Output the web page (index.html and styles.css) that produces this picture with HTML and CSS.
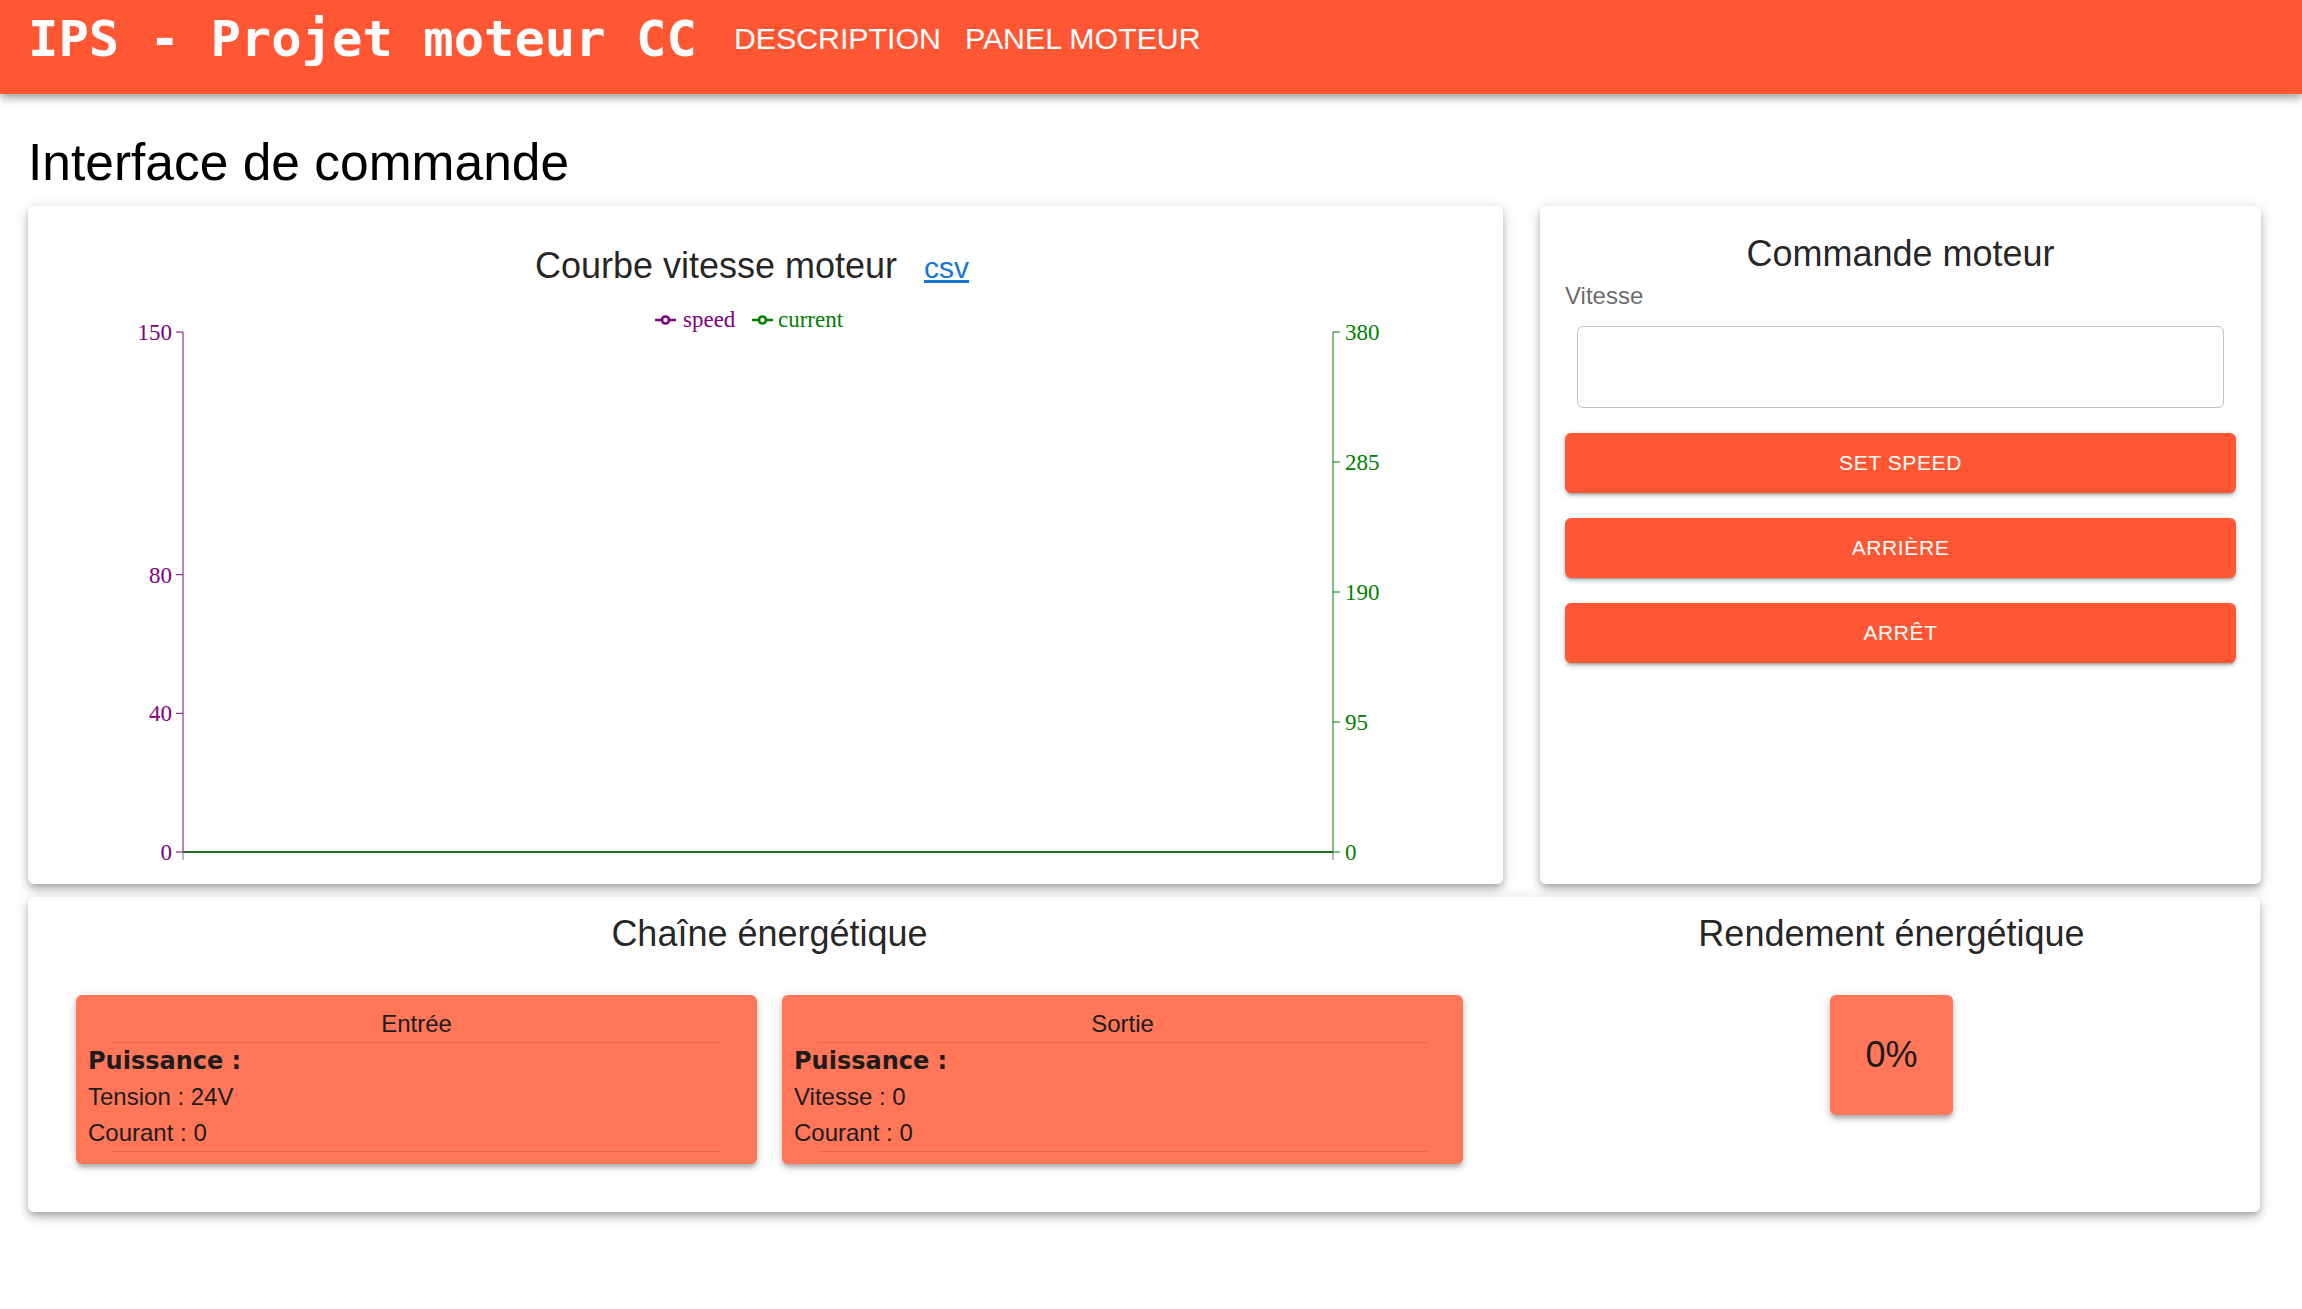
FILE: index.html
```html
<!DOCTYPE html>
<html lang="fr">
<head>
<meta charset="utf-8">
<title>IPS - Projet moteur CC</title>
<link rel="stylesheet" href="styles.css">
</head>
<body>
<header class="appbar">
  <div class="toolbar">
    <div class="brand">IPS - Projet moteur CC</div>
    <nav class="nav">
      <a class="nav-btn">Description</a>
      <a class="nav-btn">Panel moteur</a>
    </nav>
  </div>
</header>
<main class="main">
  <h1 class="page-title">Interface de commande</h1>
  <div class="top-row">
    <section class="card chart-card">
      <div class="chart-head">
        <h2 class="card-title">Courbe vitesse moteur</h2>
        <a class="csv-link" href="#">csv</a>
      </div>
      <svg class="chart" width="1475" height="594" viewBox="0 0 1475 594">
        <g class="legend">
          <svg x="627" y="19.5" width="21" height="21" viewBox="0 0 32 32"><path d="M0,16h10.667A5.333,5.333,0,1,1,21.333,16H32M21.333,16A5.333,5.333,0,1,1,10.667,16" stroke="#800080" stroke-width="4" fill="none"/></svg>
          <text x="655" y="37" fill="#800080">speed</text>
          <svg x="724" y="19.5" width="21" height="21" viewBox="0 0 32 32"><path d="M0,16h10.667A5.333,5.333,0,1,1,21.333,16H32M21.333,16A5.333,5.333,0,1,1,10.667,16" stroke="#008000" stroke-width="4" fill="none"/></svg>
          <text x="750" y="37" fill="#008000">current</text>
        </g>
        <g class="axis-left" stroke="#800080" stroke-width="1">
          <line x1="155" y1="42" x2="155" y2="562"/>
          <line x1="148" y1="42" x2="155" y2="42"/>
          <line x1="148" y1="284.7" x2="155" y2="284.7"/>
          <line x1="148" y1="423.3" x2="155" y2="423.3"/>
          <line x1="148" y1="562" x2="155" y2="562"/>
        </g>
        <g fill="#800080" text-anchor="end">
          <text x="144" y="50">150</text>
          <text x="144" y="293">80</text>
          <text x="144" y="431">40</text>
          <text x="144" y="570">0</text>
        </g>
        <g class="axis-right" stroke="#008000" stroke-width="1">
          <line x1="1305" y1="42" x2="1305" y2="562"/>
          <line x1="1305" y1="42" x2="1312" y2="42"/>
          <line x1="1305" y1="172" x2="1312" y2="172"/>
          <line x1="1305" y1="302" x2="1312" y2="302"/>
          <line x1="1305" y1="432" x2="1312" y2="432"/>
          <line x1="1305" y1="562" x2="1312" y2="562"/>
        </g>
        <g fill="#008000" text-anchor="start">
          <text x="1317" y="50">380</text>
          <text x="1317" y="180">285</text>
          <text x="1317" y="310">190</text>
          <text x="1317" y="440">95</text>
          <text x="1317" y="570">0</text>
        </g>
        <g stroke="#777" stroke-width="1">
          <line x1="155" y1="562" x2="155" y2="570"/>
          <line x1="1305" y1="562" x2="1305" y2="570"/>
        </g>
        <line x1="155" y1="562" x2="1305" y2="562" stroke="#1d6b1d" stroke-width="2"/>
      </svg>
    </section>
    <section class="card command-card">
      <h2 class="card-title center">Commande moteur</h2>
      <label class="field-label" for="vitesse">Vitesse</label>
      <input class="speed-input" id="vitesse" type="text">
      <button class="btn">Set speed</button>
      <button class="btn">Arrière</button>
      <button class="btn">Arrêt</button>
    </section>
  </div>
  <section class="card energy-card">
    <div class="energy-col energy-left">
      <h2 class="card-title center">Chaîne énergétique</h2>
      <div class="boxes">
        <div class="ebox">
          <div class="ebox-title">Entrée</div>
          <hr class="ebox-rule">
          <div class="ebox-strong">Puissance :</div>
          <div>Tension : 24V</div>
          <div>Courant : 0</div>
          <hr class="ebox-rule">
        </div>
        <div class="ebox">
          <div class="ebox-title">Sortie</div>
          <hr class="ebox-rule">
          <div class="ebox-strong">Puissance :</div>
          <div>Vitesse : 0</div>
          <div>Courant : 0</div>
          <hr class="ebox-rule">
        </div>
      </div>
    </div>
    <div class="energy-col energy-right">
      <h2 class="card-title center">Rendement énergétique</h2>
      <div class="rbox">0%</div>
    </div>
  </section>
</main>
</body>
</html>
```

FILE: styles.css
```css
* { box-sizing: border-box; }
html, body { margin: 0; padding: 0; background: #fff; }
body {
  font-family: "Liberation Sans", Arial, Helvetica, sans-serif;
  color: rgba(0, 0, 0, 0.87);
  width: 2302px;
}

.appbar {
  height: 94px;
  background: #ff5733;
  color: #fff;
  position: relative;
  z-index: 1;
  box-shadow: 0 3px 6px -1.5px rgba(0,0,0,.2), 0 6px 7.5px 0 rgba(0,0,0,.14), 0 1.5px 15px 0 rgba(0,0,0,.12);
}
.toolbar {
  height: 78px;
  display: flex;
  align-items: center;
  padding-left: 28px;
}
.brand {
  font-family: "DejaVu Sans Mono", monospace;
  font-weight: 700;
  font-size: 50.5px;
  line-height: 1;
  white-space: nowrap;
  margin-right: 25px;
}
.nav { display: flex; }
.nav-btn {
  font-size: 30.3px;
  line-height: 1;
  padding: 0 12px;
  color: #fff;
  text-transform: uppercase;
  white-space: nowrap;
}

.main { padding: 0 0 40px 28px; }
.page-title {
  margin: 37px 0 12px 0;
  font-size: 51.5px;
  line-height: 63px;
  font-weight: 400;
  color: #000;
}

.top-row { display: flex; gap: 37px; }
.card {
  background: #fff;
  border-radius: 6px;
  box-shadow: 0 4px 6px -2px rgba(0,0,0,.2), 0 6px 10px 0 rgba(0,0,0,.14), 0 2px 14px 1px rgba(0,0,0,.12);
}
.card-title {
  font-size: 36px;
  line-height: 48px;
  font-weight: 400;
  margin: 0;
  color: rgba(0,0,0,.87);
}
.center { text-align: center; }

.chart-card { width: 1475px; padding-top: 36px; }
.chart-head {
  display: flex;
  justify-content: center;
  align-items: baseline;
  height: 48px;
}
.csv-link {
  font-size: 30px;
  line-height: 48px;
  margin: 0 27px;
  color: #1976d2;
  text-decoration: underline;
}
.chart {
  display: block;
  font-family: "Liberation Serif", "Times New Roman", serif;
  font-size: 23px;
}

.command-card {
  width: 721px;
  padding: 24px 25px;
  display: flex;
  flex-direction: column;
}
.field-label {
  font-size: 24px;
  line-height: 36px;
  color: rgba(0,0,0,.6);
}
.speed-input {
  display: block;
  width: calc(100% - 24px);
  margin: 12px 12px 0;
  height: 82px;
  border: 1.5px solid #c4c4c4;
  border-radius: 6px;
  font-family: inherit;
  font-size: 24px;
  padding: 0 20px;
  outline: none;
  background: #fff;
}
.btn {
  margin-top: 25px;
  height: 60px;
  border: 0;
  border-radius: 6px;
  background: #ff5733;
  color: #fff;
  font-family: inherit;
  font-size: 21px;
  letter-spacing: 0.6px;
  text-transform: uppercase;
  box-shadow: 0 4px 2px -3px rgba(0,0,0,.2), 0 3px 3px 0 rgba(0,0,0,.14), 0 1.5px 7.5px 0 rgba(0,0,0,.12);
}

.energy-card {
  margin-top: 13px;
  width: 2232px;
  display: flex;
  padding: 13px 0 48px;
}
.energy-left { width: 1488px; padding: 0 53px 0 48px; }
.energy-right { width: 744px; padding-left: 7px; }
.boxes { display: flex; gap: 25px; margin-top: 37px; }
.ebox {
  flex: 1;
  background: #ff7659;
  border-radius: 6px;
  padding: 11px 12px 12px;
  font-size: 24px;
  line-height: 36px;
  color: #1c1c1c;
  box-shadow: 0 4px 4px -2px rgba(0,0,0,.2), 0 4px 6px 0 rgba(0,0,0,.14), 0 1.5px 12px 0 rgba(0,0,0,.12);
}
.ebox-title { text-align: center; }
.ebox-rule {
  margin: 0 24px;
  border: 0;
  border-top: 1px solid rgba(0,0,0,.12);
  height: 0;
}
.ebox-strong {
  font-family: "DejaVu Sans", sans-serif;
  font-weight: 700;
}
.rbox {
  width: 123px;
  height: 120px;
  margin: 37px auto 0;
  background: #ff7659;
  border-radius: 6px;
  display: flex;
  align-items: center;
  justify-content: center;
  font-size: 36px;
  color: #1c1c1c;
  box-shadow: 0 4px 4px -2px rgba(0,0,0,.2), 0 4px 6px 0 rgba(0,0,0,.14), 0 1.5px 12px 0 rgba(0,0,0,.12);
}
```
